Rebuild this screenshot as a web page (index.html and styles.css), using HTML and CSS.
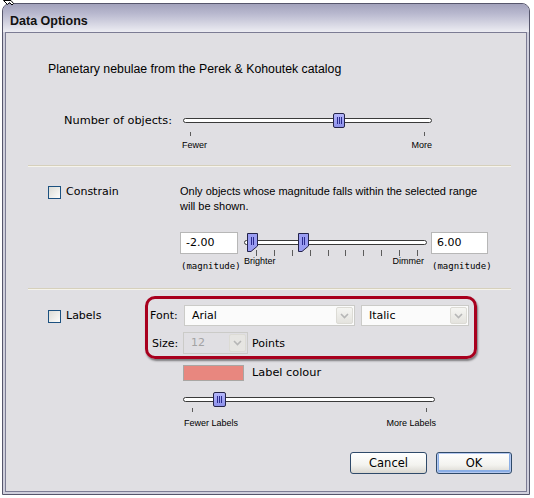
FILE: index.html
```html
<!DOCTYPE html>
<html lang="en">
<head>
  <meta charset="UTF-8" />
  <meta name="viewport" content="width=device-width, initial-scale=1.0"/>
  <title>Data Options</title>
  <link rel="stylesheet" href="styles.css">
</head>
<body>
  <svg class="pointer" width="12" height="6" viewBox="0 0 12 6">
    <polygon points="0.5,0.5 4.5,4.5 6.5,2.5 9,5 10.5,3.5 8,0.5" fill="#fff" stroke="#000" stroke-width="1"/>
  </svg>
  <div class="dialog">
    <div class="titlebar">Data Options</div>
    <div class="panel">

      <section class="group objects">
        <p class="intro">Planetary nebulae from the Perek &amp; Kohoutek catalog</p>
        <div class="row">
          <span class="row-label">Number of objects:</span>
          <div class="slider count-slider">
            <div class="slider-body">
              <div class="track"></div>
              <span class="thumb" style="left: 153px"></span>
            </div>
            <div class="ticks count-ticks"><i></i><i></i></div>
            <div class="captions count-captions"><span>Fewer</span><span>More</span></div>
          </div>
        </div>
      </section>

      <div class="divider"></div>

      <section class="group constrain">
        <label class="check"><span class="box"></span>Constrain</label>
        <div class="group-body">
          <p class="note">Only objects whose magnitude falls within the selected range<br>will be shown.</p>
          <div class="range-row">
            <div class="field-col low">
              <div class="field">-2.00</div>
              <span class="unit">(magnitude)</span>
            </div>
            <div class="range">
              <div class="range-body">
                <div class="track"></div>
                <svg class="pin" style="left: 9px" width="11" height="19" viewBox="0 0 11 19">
                  <polygon points="0.5,0.5 10.5,0.5 10.5,13 4,18.5 0.5,18.5" />
                  <line x1="4.5" y1="4" x2="4.5" y2="12" />
                  <line x1="6.5" y1="4" x2="6.5" y2="12" />
                </svg>
                <svg class="pin" style="left: 60px" width="11" height="19" viewBox="0 0 11 19">
                  <polygon points="0.5,0.5 10.5,0.5 10.5,13 4,18.5 0.5,18.5" />
                  <line x1="4.5" y1="4" x2="4.5" y2="12" />
                  <line x1="6.5" y1="4" x2="6.5" y2="12" />
                </svg>
              </div>
              <div class="ticks range-ticks"><i></i><i></i><i></i><i></i><i></i><i></i><i></i><i></i><i></i><i></i></div>
              <div class="captions range-captions"><span>Brighter</span><span>Dimmer</span></div>
            </div>
            <div class="field-col high">
              <div class="field">6.00</div>
              <span class="unit">(magnitude)</span>
            </div>
          </div>
        </div>
      </section>

      <div class="divider"></div>

      <section class="group labels">
        <label class="check"><span class="box"></span>Labels</label>
        <div class="group-body">
          <div class="font-box">
            <div class="font-row">
              <span class="font-label">Font:</span>
              <div class="select face"><span class="value">Arial</span><span class="arrow"><svg width="9" height="6" viewBox="0 0 9 6"><polyline points="1,1 4.5,4.5 8,1" /></svg></span></div>
              <div class="select style"><span class="value">Italic</span><span class="arrow"><svg width="9" height="6" viewBox="0 0 9 6"><polyline points="1,1 4.5,4.5 8,1" /></svg></span></div>
            </div>
            <div class="font-row size-row">
              <span class="font-label size-label">Size:</span>
              <div class="select size disabled"><span class="value">12</span><span class="arrow"><svg width="9" height="6" viewBox="0 0 9 6"><polyline points="1,1 4.5,4.5 8,1" /></svg></span></div>
              <span class="points">Points</span>
            </div>
          </div>
          <div class="colour-row">
            <span class="swatch"></span>
            <span>Label colour</span>
          </div>
          <div class="slider label-slider">
            <div class="slider-body">
              <div class="track"></div>
              <span class="thumb" style="left: 30px"></span>
            </div>
            <div class="ticks label-ticks"><i></i><i></i></div>
            <div class="captions label-captions"><span>Fewer Labels</span><span>More Labels</span></div>
          </div>
        </div>
      </section>

      <div class="actions">
        <button class="btn cancel">Cancel</button>
        <button class="btn ok">OK</button>
      </div>
    </div>
  </div>
</body>
</html>
```

FILE: styles.css
```css
body {
  margin: 0;
  background: #fff;
  font-family: "DejaVu Sans", Verdana, sans-serif;
  font-size: 11px;
  color: #000;
}
p {
  margin: 0;
}
.pointer {
  position: absolute;
  left: 3px;
  top: 0;
  z-index: 5;
}

/* window frame */
.dialog {
  box-sizing: border-box;
  width: 528px;
  height: 492px;
  margin: 3px 0 0 2px;
  border: 1px solid #56566c;
  border-radius: 8px 8px 0 0;
  background: #cfcfdc;
  padding: 0 2px 2px;
  display: flex;
  flex-direction: column;
}
.titlebar {
  height: 28px;
  box-sizing: border-box;
  margin: 0 -2px;
  padding: 6px 0 0 7px;
  line-height: 22px;
  border-radius: 7px 7px 0 0;
  background: linear-gradient(to bottom, #a2a2bc 0%, #b9b9cf 35%, #d9d9e5 75%, #ededf3 100%);
  font-family: "Liberation Sans", Arial, sans-serif;
  font-weight: bold;
  font-size: 12.5px;
  color: #111;
}
.panel {
  flex: 1;
  border: 1px solid #7c7c94;
  background: #e0dfe3;
  display: flex;
  flex-direction: column;
}

/* sections */
.group {
  padding-left: 42px;
}
.objects {
  padding-top: 29px;
  padding-bottom: 14px;
}
.intro {
  font-family: "Liberation Sans", Arial, sans-serif;
  font-size: 12.3px;
  line-height: 14px;
}
.row {
  display: flex;
  margin-top: 37px;
}
.row-label {
  width: 132px;
  box-sizing: border-box;
  padding-right: 8px;
  text-align: right;
  line-height: 16px;
  font-size: 11.3px;
}
.divider {
  height: 1px;
  margin: 0 15px 0 22px;
  background: #d6d0bc;
  border-bottom: 1px solid #f6f4ec;
}
.constrain {
  display: grid;
  grid-template-columns: 132px 1fr;
  padding-top: 17px;
  padding-bottom: 16px;
}
.labels {
  display: grid;
  grid-template-columns: 97px 1fr;
}
.check {
  display: flex;
  align-items: center;
  align-self: start;
  gap: 5px;
  line-height: 15px;
}
.labels .check {
  margin-top: 18px;
}
.box {
  width: 11px;
  height: 11px;
  border: 1px solid #1c5180;
  background: linear-gradient(135deg, #dcdcd6, #fdfdfb);
  margin-top: 1px;
}
.note {
  font-family: "Liberation Sans", Arial, sans-serif;
  font-size: 11px;
  line-height: 15px;
}

/* sliders */
.slider-body, .range-body {
  display: flow-root;
  position: relative;
  height: 16px;
}
.track {
  height: 3px;
  border: 1px solid #3a3a3a;
  border-radius: 3px;
  background: #fff;
}
.count-slider {
  width: 256px;
}
.count-slider .track {
  margin: 5px 4px 0 3px;
}
.thumb {
  position: absolute;
  top: 0;
  box-sizing: border-box;
  width: 12px;
  height: 15px;
  border: 1px solid #23234a;
  border-radius: 2px;
  background: linear-gradient(to bottom, #b4b6fb, #8c90ea);
}
.thumb::after {
  content: "";
  position: absolute;
  left: 3px;
  top: 3px;
  width: 5px;
  height: 7px;
  background: repeating-linear-gradient(90deg, #2b2b90 0 1px, transparent 1px 2px);
}
.ticks {
  display: flex;
  justify-content: space-between;
  height: 4px;
}
.ticks i {
  width: 1px;
  background: #5c5c5c;
}
.count-ticks {
  margin-top: 3px;
  padding: 0 11px 0 10px;
}
.captions {
  display: flex;
  justify-content: space-between;
  font-family: "Liberation Sans", Arial, sans-serif;
  font-size: 9px;
  line-height: 12px;
  white-space: nowrap;
}
.count-captions {
  margin-top: 3px;
  padding: 0 4px 0 2px;
}

/* magnitude range */
.range-row {
  display: flex;
  margin-top: 18px;
}
.field-col {
  display: flex;
  flex-direction: column;
}
.low {
  width: 58px;
}
.high {
  width: 57px;
}
.field {
  box-sizing: border-box;
  height: 22px;
  padding-left: 5px;
  line-height: 20px;
  border: 1px solid #b7b7b7;
  background: #fff;
}
.unit {
  margin-top: 6px;
  padding-left: 1px;
  font-family: "DejaVu Sans Mono", monospace;
  font-size: 9px;
  line-height: 12px;
  white-space: nowrap;
}
.range {
  width: 193px;
}
.range-body {
  height: 18px;
}
.range .track {
  margin: 8px 4px 0 6px;
}
.pin {
  position: absolute;
  top: 1px;
}
.pin polygon {
  fill: #9a9df2;
  stroke: #23234a;
}
.pin line {
  stroke: #2b2b90;
}
.range-ticks {
  height: 6px;
  padding: 0 13px 0 18px;
}
.range-captions {
  line-height: 11px;
  padding: 0 7px 0 6px;
}

/* label font settings */
.font-box {
  width: 332px;
  box-sizing: border-box;
  margin-top: 6px;
  padding: 6px 0 2px 2px;
  border: 3px solid #a8001e;
  border-radius: 10px;
  box-shadow: 1px 2px 2px rgba(0, 0, 0, 0.45);
}
.font-row {
  display: flex;
  align-items: center;
  height: 21px;
}
.size-row {
  height: 22px;
  margin-top: 6px;
}
.font-label {
  width: 34px;
}
.size-label {
  width: 31px;
  padding-left: 2px;
}
.select {
  box-sizing: border-box;
  height: 100%;
  display: flex;
  border: 1px solid #cbcbc8;
  background: #fbfbfb;
}
.select .value {
  flex: 1;
  padding-left: 7px;
  line-height: 19px;
}
.select .arrow {
  width: 15px;
  margin: 1px;
  display: flex;
  align-items: center;
  justify-content: center;
  border: 1px solid #dcdbd5;
  border-radius: 2px;
  background: linear-gradient(to bottom, #f5f5f2, #e4e3de);
}
.arrow polyline {
  fill: none;
  stroke: #b6b6b6;
  stroke-width: 1.6;
}
.face {
  width: 171px;
  margin-right: 6px;
}
.style {
  width: 108px;
}
.size {
  width: 65px;
}
.size .value {
  line-height: 20px;
}
.disabled {
  background: #e0dfe3;
  color: #a3a3a3;
}
.disabled .arrow {
  background: #e6e5e2;
}
.points {
  margin-left: 4px;
}
.colour-row {
  display: flex;
  align-items: center;
  gap: 8px;
  margin: 6px 0 0 38px;
  line-height: 16px;
  font-size: 11.3px;
}
.swatch {
  box-sizing: border-box;
  width: 61px;
  height: 16px;
  border: 1px solid #a9a6a3;
  background: #e8877f;
}
.label-slider {
  width: 254px;
  margin: 10px 0 0 38px;
}
.label-slider .track {
  margin: 6px 2px 0 0;
}
.label-slider .thumb {
  top: 1px;
  width: 13px;
}
.label-ticks {
  margin-top: 1px;
  padding: 0 10px 0 9px;
}
.label-captions {
  margin-top: 5px;
  padding: 0 1px;
}

/* buttons */
.actions {
  margin-top: auto;
  padding: 0 14px 17px 0;
  display: flex;
  justify-content: flex-end;
  gap: 9px;
}
.btn {
  height: 22px;
  padding: 0;
  border: 1px solid #2f4a6a;
  border-radius: 3px;
  background: linear-gradient(to bottom, #ffffff 0%, #f3f3ef 60%, #d9d7d0 100%);
  font-family: "DejaVu Sans", Verdana, sans-serif;
  font-size: 11.5px;
  color: #000;
}
.cancel {
  width: 77px;
}
.ok {
  width: 76px;
  box-shadow: inset 0 0 0 1px #b4c8f0, inset 0 -1px 0 2px #8aaee6;
}
```
